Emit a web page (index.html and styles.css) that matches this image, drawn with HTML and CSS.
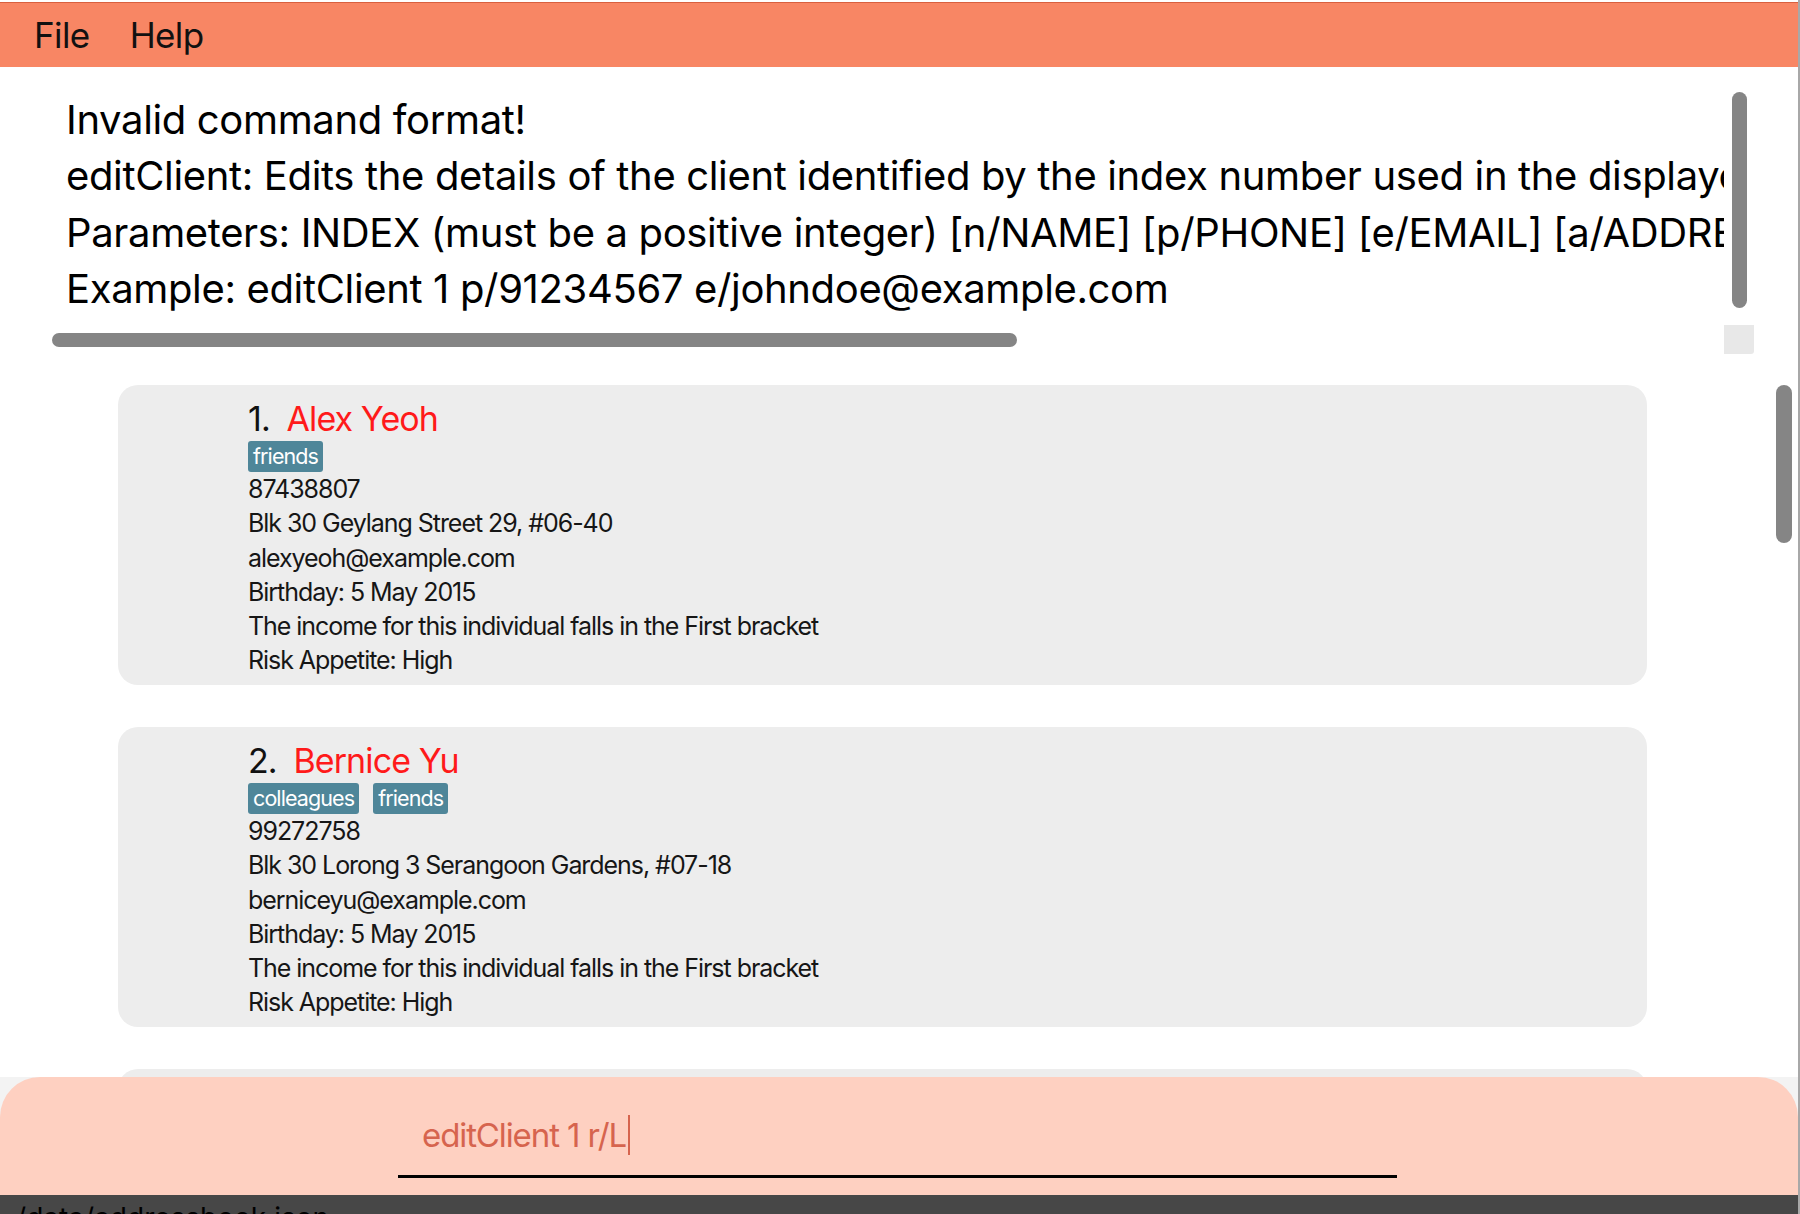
FILE: index.html
```html
<!DOCTYPE html>
<html>
<head>
<meta charset="utf-8">
<link rel="stylesheet" href="styles.css">
</head>
<body>
<div class="window">
  <div class="menubar">
    <span class="menu-item">File</span>
    <span class="menu-item">Help</span>
  </div>
  <div class="result">
    <div class="result-text">
      <div class="result-line">Invalid command format!</div>
      <div class="result-line">editClient: Edits the details of the client identified by the index number used in the displayed client list. Existing values will be overwritten by the input values.</div>
      <div class="result-line">Parameters: INDEX (must be a positive integer) [n/NAME] [p/PHONE] [e/EMAIL] [a/ADDRESS] [t/TAG]...</div>
      <div class="result-line">Example: editClient 1 p/91234567 e/johndoe@example.com</div>
    </div>
    <div class="vscroll-thumb result-vthumb"></div>
    <div class="hscroll-thumb"></div>
    <div class="scroll-corner"></div>
  </div>
  <div class="list">
    <div class="card">
      <div class="card-name"><span class="idx">1.</span> <span class="name">Alex Yeoh</span></div>
      <div class="tags"><span class="tag">friends</span></div>
      <div class="detail">87438807</div>
      <div class="detail">Blk 30 Geylang Street 29, #06-40</div>
      <div class="detail">alexyeoh@example.com</div>
      <div class="detail">Birthday: 5 May 2015</div>
      <div class="detail">The income for this individual falls in the First bracket</div>
      <div class="detail">Risk Appetite: High</div>
    </div>
    <div class="card">
      <div class="card-name"><span class="idx">2.</span> <span class="name">Bernice Yu</span></div>
      <div class="tags"><span class="tag">colleagues</span><span class="tag">friends</span></div>
      <div class="detail">99272758</div>
      <div class="detail">Blk 30 Lorong 3 Serangoon Gardens, #07-18</div>
      <div class="detail">berniceyu@example.com</div>
      <div class="detail">Birthday: 5 May 2015</div>
      <div class="detail">The income for this individual falls in the First bracket</div>
      <div class="detail">Risk Appetite: High</div>
    </div>
    <div class="card card-peek"></div>
    <div class="vscroll-thumb list-vthumb"></div>
  </div>
  <div class="command">
    <div class="command-box">
      <div class="command-input"><span class="command-text">editClient 1 r/L</span><span class="caret"></span></div>
    </div>
  </div>
  <div class="status"><span class="status-text">./data/addressbook.json</span></div>
</div>
</body>
</html>
```

FILE: styles.css
```css
* { box-sizing: border-box; }
html, body { margin: 0; padding: 0; }
body {
  width: 1800px;
  height: 1214px;
  overflow: hidden;
  background: #ffffff;
  font-family: Inter, "Noto Sans", sans-serif;
  color: #000;
}
.window {
  width: 1800px;
  height: 1214px;
  display: flex;
  flex-direction: column;
  border-right: 2px solid #a8a8a8;
  padding-top: 2px;
  overflow: hidden;
}
.menubar {
  height: 65px;
  flex: none;
  background: #f88664;
  border-top: 1px solid #d9603f;
  display: flex;
  align-items: center;
  padding-left: 34px;
  gap: 40px;
  font-size: 35px;
  letter-spacing: -0.6px;
  color: #111;
}
.result {
  position: relative;
  height: 295px;
  flex: none;
  overflow: hidden;
}
.result-text {
  padding: 25px 0 0 66px;
  width: 1724px;
  overflow: hidden;
  font-size: 40px;
  letter-spacing: -0.35px;
  line-height: 56.3px;
  white-space: nowrap;
}
.vscroll-thumb {
  position: absolute;
  background: #858585;
  border-radius: 8px;
}
.result-vthumb {
  left: 1732px;
  top: 25px;
  width: 15px;
  height: 216px;
}
.hscroll-thumb {
  position: absolute;
  left: 52px;
  top: 266px;
  width: 965px;
  height: 14px;
  background: #858585;
  border-radius: 7px;
}
.scroll-corner {
  position: absolute;
  left: 1724px;
  top: 258px;
  width: 30px;
  height: 29px;
  background: #e8e8e8;
  border-radius: 0 0 3px 0;
}
.list {
  position: relative;
  flex: 1;
  min-height: 0;
  overflow: hidden;
  padding: 23px 0 0 118px;
}
.list-vthumb {
  left: 1776px;
  top: 23px;
  width: 16px;
  height: 158px;
}
.card {
  width: 1529px;
  height: 300px;
  background: #ededed;
  border-radius: 20px;
  padding: 11px 0 7px 130px;
  margin-bottom: 42px;
  color: #161616;
}
.card-name {
  height: 45px;
  line-height: 45px;
  font-size: 34px;
  letter-spacing: -0.9px;
}
.idx { color: #111; }
.name { color: #ff1a1a; margin-left: 8px; }
.tags {
  height: 31px;
  display: flex;
  gap: 14px;
}
.tag {
  height: 31px;
  line-height: 31px;
  padding: 0 5px;
  background: #4f8699;
  color: #fff;
  border-radius: 3px;
  font-size: 21.5px;
  letter-spacing: -0.9px;
}
.detail {
  height: 34.3px;
  line-height: 34.3px;
  font-size: 25px;
  letter-spacing: -1.05px;
  white-space: nowrap;
}
.command {
  height: 118px;
  flex: none;
  background: #f3f3f3;
}
.command-box {
  height: 118px;
  background: #fed0c1;
  border-radius: 40px 40px 0 0;
  padding-left: 398px;
  padding-top: 36px;
}
.command-input {
  width: 999px;
  height: 65px;
  border-bottom: 3px solid #000;
  padding-left: 24px;
  padding-top: 2px;
  display: flex;
  align-items: flex-start;
  font-size: 33px;
  line-height: 40px;
  letter-spacing: -1.1px;
  color: #d6644e;
}
.caret {
  display: inline-block;
  width: 2px;
  height: 40px;
  background: #d6644e;
  margin-left: 2px;
}
.status {
  height: 19px;
  flex: none;
  background: #474747;
  overflow: hidden;
  padding: 9px 0 0 8px;
}
.status-text {
  display: block;
  color: #000;
  font-size: 28px;
  line-height: 28px;
}
```
